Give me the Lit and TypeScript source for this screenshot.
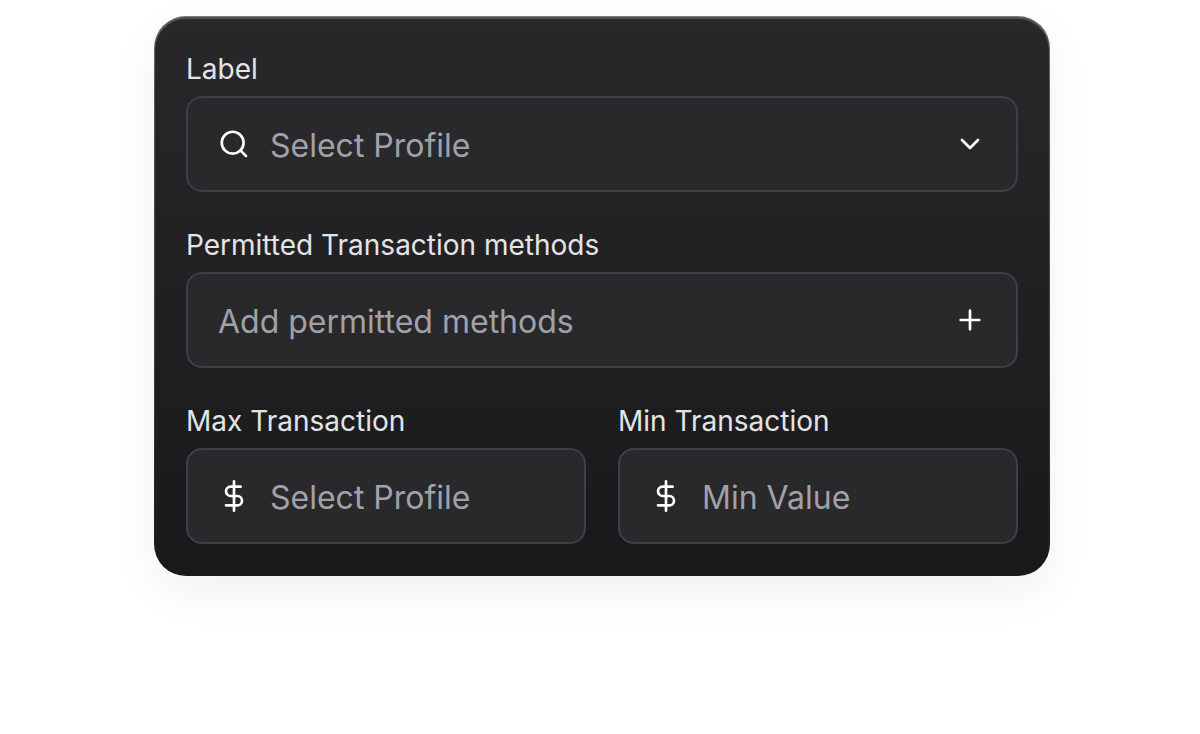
import { LitElement, html, css, svg } from "lit";
import { customElement } from "lit/decorators.js";

const icon = (shape: unknown) => html`
  <svg class="icon" viewBox="0 0 24 24" aria-hidden="true">${shape}</svg>
`;

const searchIcon = icon(svg`<circle cx="11" cy="11" r="8.2"/><path d="M21 21l-4.2-4.2"/>`);
const chevronIcon = icon(svg`<path d="M6 9l6 6 6-6"/>`);
const plusIcon = icon(svg`<path d="M12 5v14M5 12h14"/>`);
const dollarIcon = icon(
  svg`<path d="M12 1v22M17 5H9.5a3.5 3.5 0 0 0 0 7h5a3.5 3.5 0 0 1 0 7H6"/>`
);

@customElement("app-root")
export class AppRoot extends LitElement {
  static styles = css`
    :host {
      display: block;
      box-sizing: border-box;
      min-height: 100vh;
      padding: 16px 150px 16px 154px;
      background: #fff;
      font-family: Inter, "Liberation Sans", sans-serif;
    }
    .card {
      box-sizing: border-box;
      display: grid;
      grid-template-columns: repeat(2, minmax(0, 1fr));
      gap: 32px;
      padding: 31px;
      border: 1px solid transparent;
      border-radius: 32px;
      background:
        linear-gradient(#28282a, #19191b) padding-box,
        linear-gradient(#7c7c7e, #58585a 12%, #434346 55%, #19191b) border-box;
      box-shadow:
        inset 0 2px 1px rgba(255, 255, 255, 0.2),
        0 16px 48px rgba(0, 0, 0, 0.06);
    }
    .group {
      display: flex;
      flex-direction: column;
      gap: 6px;
    }
    .wide {
      grid-column: 1 / -1;
    }
    .label {
      font-size: 28px;
      line-height: 42px;
      color: #e4e4e7;
    }
    .field {
      box-sizing: border-box;
      display: flex;
      align-items: center;
      gap: 20px;
      height: 96px;
      padding: 0 30px;
      border: 2px solid #3f3f46;
      border-radius: 16px;
      background: #29292b;
      color: #fff;
    }
    .field:focus-within {
      border-color: #71717a;
    }
    .input {
      flex: 1;
      min-width: 0;
      padding: 4px 0 0;
      border: 0;
      outline: 0;
      background: none;
      color: #fff;
      font: inherit;
      font-size: 32px;
      line-height: 40px;
    }
    .input::placeholder {
      color: #a1a1aa;
      opacity: 1;
    }
    .action {
      display: flex;
      padding: 0;
      border: 0;
      background: none;
      color: inherit;
      cursor: pointer;
    }
    .icon {
      flex: none;
      width: 32px;
      height: 32px;
      fill: none;
      stroke: currentColor;
      stroke-width: 2;
      stroke-linecap: round;
      stroke-linejoin: round;
    }
  `;

  render() {
    return html`
      <form class="card">
        <div class="group wide">
          <label class="label" for="profile">Label</label>
          <div class="field">
            ${searchIcon}
            <input class="input" id="profile" type="text" placeholder="Select Profile" />
            <button class="action" type="button" aria-label="Open profiles">${chevronIcon}</button>
          </div>
        </div>
        <div class="group wide">
          <label class="label" for="methods">Permitted Transaction methods</label>
          <div class="field">
            <input class="input" id="methods" type="text" placeholder="Add permitted methods" />
            <button class="action" type="button" aria-label="Add method">${plusIcon}</button>
          </div>
        </div>
        <div class="group">
          <label class="label" for="max">Max Transaction</label>
          <div class="field">
            ${dollarIcon}
            <input class="input" id="max" type="text" placeholder="Select Profile" />
          </div>
        </div>
        <div class="group">
          <label class="label" for="min">Min Transaction</label>
          <div class="field">
            ${dollarIcon}
            <input class="input" id="min" type="text" placeholder="Min Value" />
          </div>
        </div>
      </form>
    `;
  }
}
